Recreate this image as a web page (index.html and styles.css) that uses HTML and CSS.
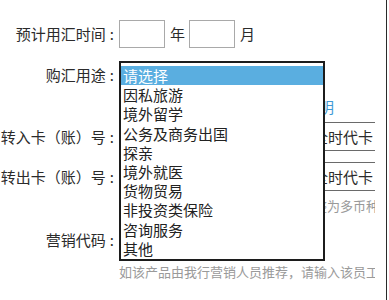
FILE: index.html
```html
<!DOCTYPE html>
<html lang="zh-CN">
<head>
<meta charset="utf-8">
<title>购汇申请</title>
<link rel="stylesheet" href="styles.css">
</head>
<body>
<div class="page">
  <div class="row r1">
    <div class="label">预计用汇时间<span class="colon">:</span></div>
    <div class="field date">
      <span class="box"></span><span class="unit">年</span><span class="box"></span><span class="unit">月</span>
    </div>
  </div>

  <div class="row r2">
    <div class="label">购汇用途<span class="colon">:</span></div>
    <div class="field purpose">
      <div class="select"></div>
      <ul class="dropdown">
        <li class="active">请选择</li>
        <li>因私旅游</li>
        <li>境外留学</li>
        <li>公务及商务出国</li>
        <li>探亲</li>
        <li>境外就医</li>
        <li>货物贸易</li>
        <li>非投资类保险</li>
        <li>咨询服务</li>
        <li>其他</li>
      </ul>
    </div>
  </div>

  <div class="row link">
    <div class="label"></div>
    <div class="field"><span class="blue">购汇用途说明</span></div>
  </div>

  <div class="row card r3">
    <div class="label">转入卡（账）号<span class="colon">:</span></div>
    <div class="field line">借记卡-全时代卡</div>
  </div>

  <div class="row card r4">
    <div class="label">转出卡（账）号<span class="colon">:</span></div>
    <div class="field line">借记卡-全时代卡</div>
  </div>

  <div class="row hint h1">
    <div class="label"></div>
    <div class="field clip">如需办理外币业务，请将该账户调整为多币种账户</div>
  </div>

  <div class="row r5">
    <div class="label">营销代码<span class="colon">:</span></div>
    <div class="field"><span class="code"></span></div>
  </div>

  <div class="row hint h2">
    <div class="label"></div>
    <div class="field clip">如该产品由我行营销人员推荐，请输入该员工营销代码</div>
  </div>
</div>
</body>
</html>
```

FILE: styles.css
```css
html, body {
  margin: 0;
  padding: 0;
  background: #fff;
}

body {
  font-family: "Noto Sans CJK SC", "Liberation Sans", sans-serif;
  color: #2b2b2b;
  font-size: 15px;
}

.page {
  width: 387px;
  height: 300px;
  border-right: 1px solid #2a2a2a;
  padding-top: 20px;
  box-sizing: border-box;
  overflow: hidden;
}

.row {
  display: flex;
  align-items: center;
}

.label {
  flex: none;
  width: 114px;
  padding-right: 5px;
  text-align: right;
  line-height: 18px;
  white-space: nowrap;
}

.colon {
  margin-left: 4px;
}

.field {
  flex: none;
  width: 256px;
  position: relative;
  line-height: 18px;
}

/* row 1 */
.r1 { height: 28px; }
.date {
  display: flex;
  align-items: center;
}
.box {
  width: 46px;
  height: 28px;
  box-sizing: border-box;
  border: 1px solid #a9a9a9;
}
.unit {
  margin: 0 4px 0 5px;
}

/* row 2 */
.r2 {
  margin-top: 13px;
  height: 28px;
}
.purpose {
  height: 28px;
}
.select {
  width: 200px;
  height: 28px;
  box-sizing: border-box;
  border: 1px solid #a9a9a9;
}
.dropdown {
  position: absolute;
  left: 0;
  top: 0;
  z-index: 5;
  width: 206px;
  height: 200px;
  box-sizing: border-box;
  margin: 0;
  padding: 3px 0 0 0;
  list-style: none;
  background: #fff;
  border: 2px solid #1c1c1c;
}
.dropdown li {
  height: 19.2px;
  line-height: 19.2px;
  padding-left: 2px;
  color: #222;
  white-space: nowrap;
}
.dropdown li.active {
  background: #5aaee0;
  color: #fff;
}

/* link row */
.link {
  margin-top: 9px;
  height: 18px;
}
.blue {
  color: #3f9ad6;
  margin-left: 125px;
}

/* card rows */
.card { height: 29px; }
.r3 { margin-top: 6px; }
.r4 { margin-top: 11px; }
.line {
  height: 29px;
  box-sizing: border-box;
  border-top: 1px solid #6a6a6a;
  border-bottom: 1px solid #6a6a6a;
  display: flex;
  align-items: center;
  justify-content: flex-end;
  padding-right: 2px;
  white-space: nowrap;
  overflow: hidden;
}

/* hints */
.hint { height: 16px; }
.clip {
  font-size: 13px;
  color: #9a9a9a;
  white-space: nowrap;
  overflow: hidden;
  line-height: 16px;
}
.h1 { margin-top: 7px; }
.h2 { margin-top: 10px; }

/* row 5 */
.r5 {
  margin-top: 12px;
  height: 28px;
}
.code {
  display: block;
  width: 180px;
  height: 28px;
  box-sizing: border-box;
  border: 1px solid #a9a9a9;
}
```
